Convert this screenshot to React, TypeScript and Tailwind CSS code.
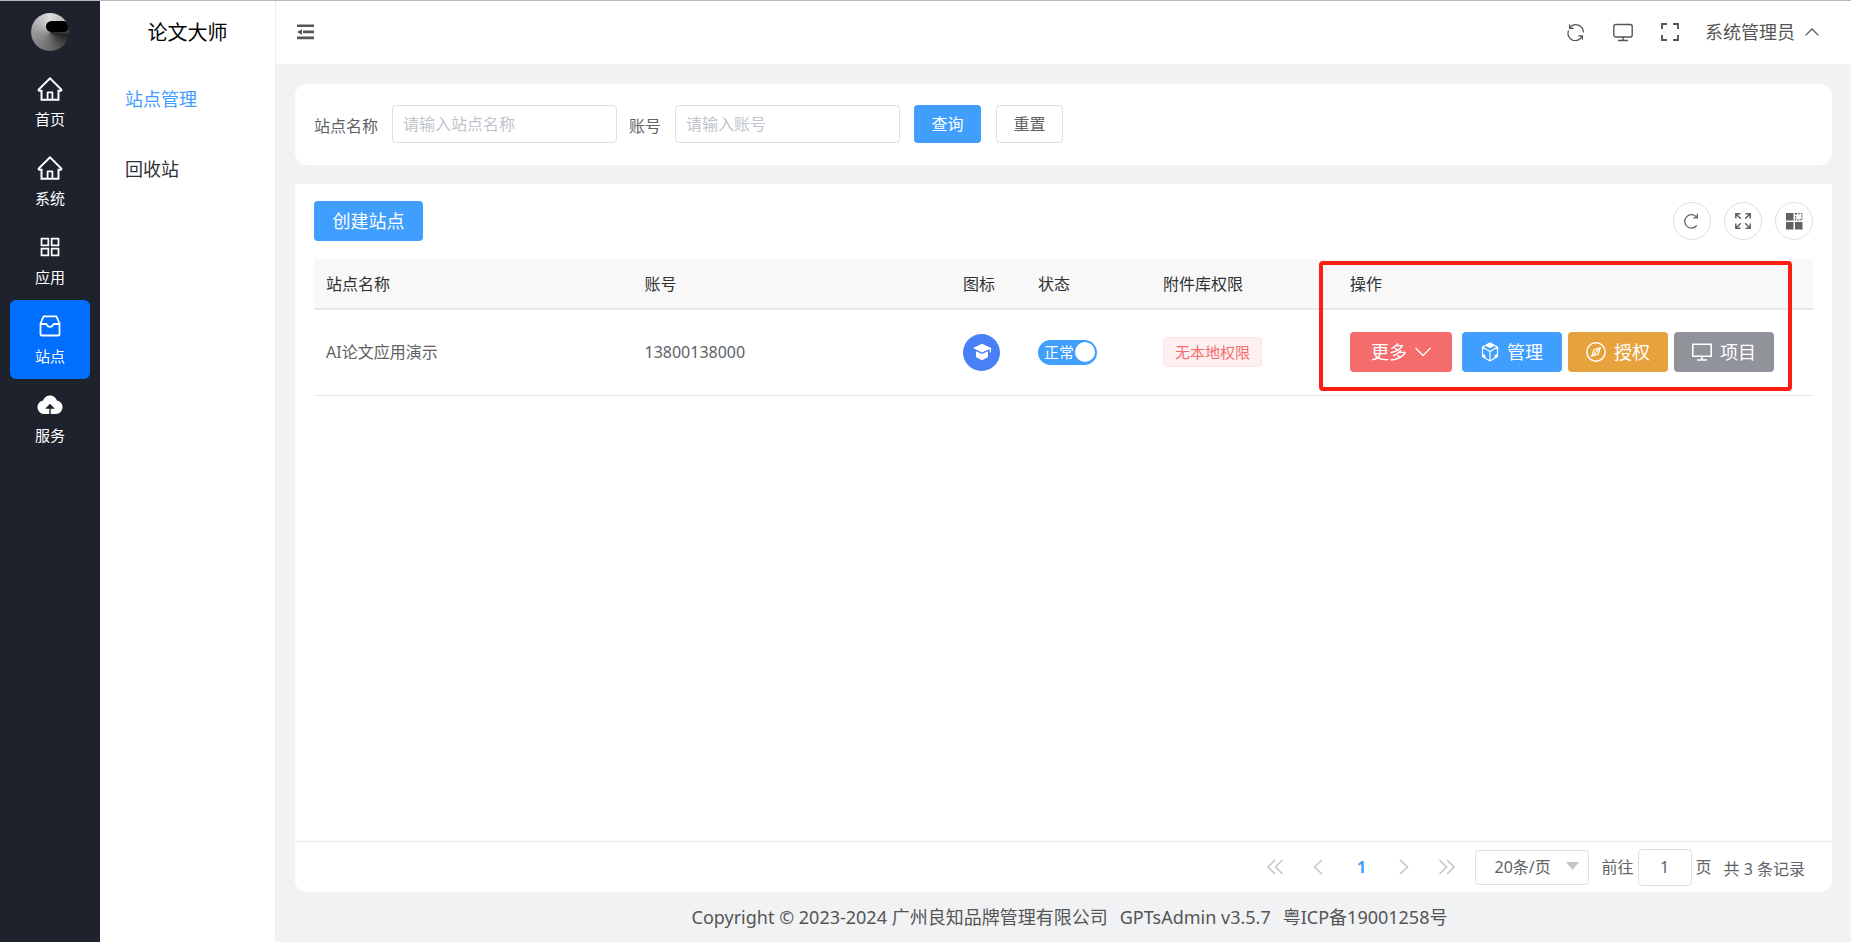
import { useState } from "react";
import type { ReactNode, SVGProps } from "react";
import { AiOutlineHome, AiOutlineAppstore } from "react-icons/ai";

type IconProps = SVGProps<SVGSVGElement>;

function Line({ children, ...rest }: IconProps) {
  return (
    <svg fill="none" stroke="currentColor" aria-hidden="true" {...rest}>
      {children}
    </svg>
  );
}

const InboxIcon = () => (
  <Line width="24" height="24" viewBox="0 0 24 24" strokeWidth="1.8" strokeLinejoin="round">
    <path d="M5.6 2.3h12.8l3.1 7.2v11a1 1 0 0 1-1 1h-17a1 1 0 0 1-1-1v-11z" />
    <path d="M2.5 10h5.3c.6 0 .9.4 1.2 1 .6 1.200 1.600 1.900 3 1.900s2.400-.7 3-1.900c.3-.6.6-1 1.200-1h5.300" />
  </Line>
);

const CloudIcon = () => (
  <svg width="26" height="26" viewBox="0 0 26 26" fill="currentColor" aria-hidden="true">
    <path d="M13 3.500c3.300 0 6 2 6.900 5A6.500 6.500 0 0 1 25.500 15c0 3.800-2.800 6.900-6.500 7h-5.300v-5.300h4.100L13 11.800l-4.800 4.900h4.100V22H7C3.300 21.900.500 18.800.500 15a6.500 6.500 0 0 1 5.600-6.500c.9-3 3.600-5 6.900-5z" />
  </svg>
);

const FoldIcon = () => (
  <svg width="18" height="16" viewBox="0 0 18 16" fill="currentColor" aria-hidden="true">
    <path d="M0 .5h17v2.600H0zM6 6.600h11v2.700H6zM0 12.600h17v2.600H0zM0 8l5-2.800v5.600z" />
  </svg>
);

const SyncIcon = () => (
  <Line width="18" height="18" viewBox="0 0 18 18" strokeWidth="1.300">
    <path d="M3 4.700A7.300 7.300 0 0 1 16.200 9.500M1.600 7.500A7.300 7.300 0 0 0 15 13.300" />
    <path d="M2.600 1.300v4h4M15.400 16.800v-4h-4" />
  </Line>
);

const ScreenIcon = () => (
  <Line width="20" height="20" viewBox="0 0 20 20" strokeWidth="1.400">
    <rect x="0.800" y="2.500" width="18.400" height="12.500" rx="2" />
    <path d="M10 15v3M5 18.500h10" />
  </Line>
);

const BracketsIcon = () => (
  <Line width="18" height="18" viewBox="0 0 18 18" strokeWidth="1.900">
    <path d="M1 6V1h5M12 1h5v5M17 12v5h-5M6 17H1v-5" />
  </Line>
);

const ReloadIcon = () => (
  <Line width="16" height="16" viewBox="0 0 16 16" strokeWidth="1.300">
    <path d="M12.700 12.500A6.700 6.700 0 1 1 12.500 4" />
    <path d="M13.300.8v4.100H9.200" />
  </Line>
);

const ExpandIcon = () => (
  <Line width="16" height="16" viewBox="0 0 16 16" strokeWidth="1.500">
    <path d="M.8 5.500V.8h4.700M1 1l4.800 4.800M10.500.8h4.700v4.700M15 1l-4.800 4.800M15.200 10.500v4.700h-4.700M15 15l-4.800-4.800M5.500 15.200H.8v-4.700M1 15l4.800-4.800" />
  </Line>
);

const ColumnsIcon = () => (
  <svg width="17" height="17" viewBox="0 0 17 17" aria-hidden="true">
    <path d="M0 0h7.500v7.500H0zM0 9h7.500v7.500H0zM9 9h7.500v7.500H9z" fill="currentColor" />
    <rect x="9.600" y="0.600" width="6.200" height="6.200" fill="none" stroke="currentColor" strokeWidth="1.200" strokeDasharray="1.600 1" />
  </svg>
);

const CubeIcon = () => (
  <svg width="18" height="20" viewBox="0 0 18 20" aria-hidden="true">
    <path d="M9 1l7.500 4v9.500L9 19l-7.500-4.500V5zM1.500 5L9 9.500 16.500 5M9 9.500V19" fill="none" stroke="currentColor" strokeWidth="1.200" strokeLinejoin="round" />
    <path d="M9 .7l3.500 1.900v1.800L9 6 5.500 4.400V2.600zM1.200 11.500l3.200 1.700v3.200l-3.200-1.700zM16.800 11.500l-3.200 1.700v3.200l3.200-1.700z" fill="currentColor" />
  </svg>
);

const CompassIcon = () => (
  <Line width="20" height="20" viewBox="0 0 20 20" strokeWidth="1.400" strokeLinejoin="round">
    <circle cx="10" cy="10" r="9.200" />
    <path d="M14.300 5.700l-2.200 6.400-6.400 2.200 2.200-6.400zM14.300 5.700l-8.600 8.600" strokeWidth="1.200" />
  </Line>
);

const DesktopIcon = () => (
  <Line width="20" height="20" viewBox="0 0 20 20" strokeWidth="1.600">
    <path d="M.8 2.300h18.400v12H.8zM10 14.300v3.500M5 18h10" />
  </Line>
);

const GraduationIcon = () => (
  <svg width="20" height="18" viewBox="0 0 20 18" fill="currentColor" aria-hidden="true">
    <path d="M10 .8l9 4.200v4.500h-1.200V6L10 9.400 1 5zM4 8.300l6 2.600 6-2.600v5.200c0 .5-.2.8-.6 1L10 17.200 4.600 14.500c-.4-.2-.6-.5-.6-1z" />
  </svg>
);

const railItems: { label: string; icon: ReactNode; active?: boolean }[] = [
  { label: "首页", icon: <AiOutlineHome size={28} /> },
  { label: "系统", icon: <AiOutlineHome size={28} /> },
  { label: "应用", icon: <AiOutlineAppstore size={26} /> },
  { label: "站点", icon: <InboxIcon />, active: true },
  { label: "服务", icon: <CloudIcon /> },
];

function Rail() {
  return (
    <nav aria-label="主导航" className="flex w-25 shrink-0 flex-col items-center bg-[#1e222d] text-white">
      <div className="flex h-[62px] items-center">
        <div className="flex size-[38px] justify-end overflow-hidden rounded-full bg-[conic-gradient(#dddddd_0deg,#bdbdbd_50deg,#222222_100deg,#555555_150deg,#777777_200deg,#999999_270deg,#dddddd_360deg)] pt-2">
          <span className="h-[11px] w-[23px] rounded-full bg-black" />
        </div>
      </div>
      {railItems.map((item) => (
        <a
          key={item.label}
          href="#"
          className={
            item.active
              ? "flex h-[79px] w-20 flex-col items-center rounded-md bg-[#006eff] pt-3"
              : "flex h-[79px] w-20 flex-col items-center pt-3"
          }
        >
          <span className="flex h-7 items-center">{item.icon}</span>
          <span className="mt-1.5 text-[15px] leading-5">{item.label}</span>
        </a>
      ))}
    </nav>
  );
}

function SideMenu() {
  return (
    <aside className="w-44 shrink-0 border-r border-[#eeeeee] bg-white">
      <h1 className="flex h-[63px] items-center justify-center text-xl text-black">论文大师</h1>
      <ul className="text-lg text-[#303133]">
        <li>
          <a href="#" className="flex h-[70px] items-center pl-[25px] text-[#409eff]">站点管理</a>
        </li>
        <li>
          <a href="#" className="flex h-[70px] items-center pl-[25px]">回收站</a>
        </li>
      </ul>
    </aside>
  );
}

function TopBar() {
  return (
    <header className="flex h-[63px] items-center justify-between bg-white pr-8 pb-0.5 pl-[21px] text-[#555555]">
      <button aria-label="收起菜单"><FoldIcon /></button>
      <div className="flex items-center">
        <button aria-label="刷新"><SyncIcon /></button>
        <button aria-label="主页" className="ml-7"><ScreenIcon /></button>
        <button aria-label="全屏" className="ml-7"><BracketsIcon /></button>
        <button className="ml-[26px] flex items-center gap-2.5 text-lg leading-6">
          系统管理员
          <Line width="14" height="8" viewBox="0 0 14 8" strokeWidth="1.300">
            <path d="M.6 7.400L7 1l6.400 6.400" />
          </Line>
        </button>
      </div>
    </header>
  );
}

const fieldClass =
  "h-[38px] w-[225px] rounded border border-[#dcdfe6] px-2.5 text-base placeholder:text-[#c0c4cc] focus:border-[#409eff] focus:outline-none";

function SearchForm() {
  return (
    <form className="flex h-[81px] items-center rounded-xl bg-white px-[19px] pb-0.5" onSubmit={(e) => e.preventDefault()}>
      <label htmlFor="site-name" className="pt-1">站点名称</label>
      <input id="site-name" placeholder="请输入站点名称" className={"ml-3.5 " + fieldClass} />
      <label htmlFor="account" className="ml-3 pt-1">账号</label>
      <input id="account" placeholder="请输入账号" className={"ml-3.5 " + fieldClass} />
      <button type="submit" className="ml-3.5 h-[38px] w-[67px] rounded bg-[#409eff] text-white">查询</button>
      <button type="reset" className="ml-[15px] h-[38px] w-[67px] rounded border border-[#dcdfe6]">重置</button>
    </form>
  );
}

function ActionButton({ size = "w-25", color, children }: { size?: string; color: string; children: ReactNode }) {
  return (
    <button className={"flex h-10 items-center justify-center gap-2 rounded text-lg text-white " + size + " " + color}>
      {children}
    </button>
  );
}

function RoundButton({ label, children }: { label: string; children: ReactNode }) {
  return (
    <button aria-label={label} className="flex size-[38px] items-center justify-center rounded-full border border-[#dcdfe6]">
      {children}
    </button>
  );
}

function SiteTable() {
  const [enabled, setEnabled] = useState(true);
  return (
    <div className="relative mt-[18px]">
      <table className="w-full table-fixed border-collapse text-left">
        <colgroup>
          <col />
          <col />
          <col className="w-[75px]" />
          <col className="w-[125px]" />
          <col className="w-[187px]" />
          <col className="w-[475px]" />
        </colgroup>
        <thead>
          <tr className="h-[50px] border-b-2 border-[#e8e8e8] bg-[#f8f8f8] text-[#303133]">
            <th className="px-3 font-normal">站点名称</th>
            <th className="px-3 font-normal">账号</th>
            <th className="px-3 font-normal">图标</th>
            <th className="px-3 font-normal">状态</th>
            <th className="px-3 font-normal">附件库权限</th>
            <th className="px-3 font-normal">操作</th>
          </tr>
        </thead>
        <tbody>
          <tr className="h-[86px] border-b border-[#e8e8e8]">
            <td className="px-3">AI论文应用演示</td>
            <td className="px-3">13800138000</td>
            <td className="pl-3">
              <div className="flex size-[37px] items-center justify-center rounded-full bg-[#4a80f6] text-white">
                <GraduationIcon />
              </div>
            </td>
            <td className="px-3">
              <label className="flex h-[25px] w-[59px] cursor-pointer items-center justify-between rounded-full bg-[#409eff] pr-0.5 pl-1.5 text-[15px] text-white">
                <input
                  type="checkbox"
                  role="switch"
                  aria-label="状态"
                  className="sr-only"
                  checked={enabled}
                  onChange={(e) => setEnabled(e.target.checked)}
                />
                正常
                <span className="size-5 rounded-full bg-white" />
              </label>
            </td>
            <td className="px-3">
              <span className="flex h-[30px] w-[99px] items-center justify-center rounded border border-[#fde2e2] bg-[#fef0f0] text-[15px] text-[#f56c6c]">
                无本地权限
              </span>
            </td>
            <td className="px-3">
              <div className="flex gap-1.5">
                <div className="mr-1">
                  <ActionButton size="w-[102px]" color="bg-[#f56c6c]">
                    更多
                    <Line width="16" height="10" viewBox="0 0 16 10" strokeWidth="1.300">
                      <path d="M.5 1L8 8.500 15.500 1" />
                    </Line>
                  </ActionButton>
                </div>
                <ActionButton color="bg-[#409eff]"><CubeIcon />管理</ActionButton>
                <ActionButton color="bg-[#e6a23c]"><CompassIcon />授权</ActionButton>
                <ActionButton color="bg-[#909399]"><DesktopIcon />项目</ActionButton>
              </div>
            </td>
          </tr>
        </tbody>
      </table>
      <div className="pointer-events-none absolute top-0.5 right-[21px] h-[130px] w-[473px] rounded border-4 border-[#ff1d12]" />
    </div>
  );
}

function PageArrow({ label, double, flip }: { label: string; double?: boolean; flip?: boolean }) {
  return (
    <button aria-label={label} className="flex w-[18px] justify-center text-[#c0c4cc]">
      <Line width="18" height="16" viewBox="0 0 18 16" strokeWidth="1.500" className={flip ? "-scale-x-100" : ""}>
        <path d={double ? "M9 1L2 8l7 7M16.500 1l-7 7 7 7" : "M13 1L5.500 8l7.500 7"} />
      </Line>
    </button>
  );
}

function Pagination() {
  return (
    <div className="flex h-[51px] items-center justify-end border-t border-[#e8eaec] pr-[27px]">
      <div className="flex items-center gap-[25px]">
        <PageArrow label="首页" double />
        <PageArrow label="上一页" />
        <button aria-current="page" className="w-[18px] font-bold text-[#409eff]">1</button>
        <PageArrow label="下一页" flip />
        <PageArrow label="末页" double flip />
      </div>
      <div className="relative ml-[19px]">
        <select aria-label="每页条数" className="h-[35px] w-[114px] appearance-none rounded border border-[#dcdfe6] bg-white pl-[18px] text-base">
          <option>20条/页</option>
          <option>50条/页</option>
        </select>
        <svg width="13" height="8" viewBox="0 0 13 8" fill="#c0c4cc" aria-hidden="true" className="pointer-events-none absolute top-3 right-2.5">
          <path d="M0 0h13L6.500 8z" />
        </svg>
      </div>
      <label className="ml-3 flex items-center gap-1">
        前往
        <input defaultValue="1" className="h-[37px] w-[54px] rounded border border-[#dcdfe6] text-center text-base" />
        页
      </label>
      <span className="ml-3 pt-1">共 3 条记录</span>
    </div>
  );
}

export default function App() {
  return (
    <div className="flex min-h-screen border-t border-[#b9b9b9] bg-[#f1f2f4] font-['Noto_Sans','Noto_Sans_CJK_SC',sans-serif] text-base text-[#606266]">
      <Rail />
      <SideMenu />
      <div className="flex min-w-0 flex-1 flex-col">
        <TopBar />
        <main className="flex flex-1 flex-col gap-[19px] px-[19px] pt-5">
          <SearchForm />
          <section className="flex flex-1 flex-col rounded-b-xl bg-white">
            <div className="flex-1 px-[19px] pt-[17px]">
              <div className="flex items-center justify-between">
                <button className="h-10 w-[109px] rounded bg-[#409eff] text-lg text-white">创建站点</button>
                <div className="flex gap-[13px]">
                  <RoundButton label="刷新"><ReloadIcon /></RoundButton>
                  <RoundButton label="全屏"><ExpandIcon /></RoundButton>
                  <RoundButton label="列设置"><ColumnsIcon /></RoundButton>
                </div>
              </div>
              <SiteTable />
            </div>
            <Pagination />
          </section>
        </main>
        <footer className="flex h-[50px] items-center justify-center gap-3 pl-3 text-lg text-[#555555]">
          <span>Copyright © 2023-2024 广州良知品牌管理有限公司</span>
          <span>GPTsAdmin v3.5.7</span>
          <span>粤ICP备19001258号</span>
        </footer>
      </div>
    </div>
  );
}
